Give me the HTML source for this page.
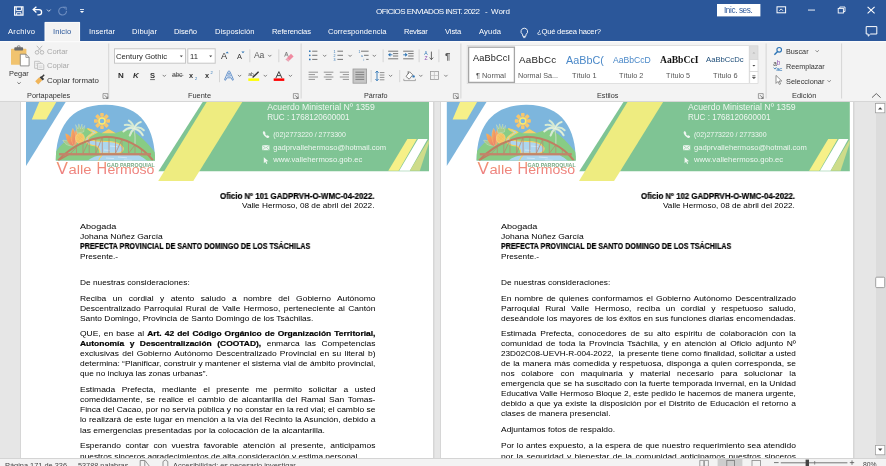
<!DOCTYPE html>
<html><head><meta charset="utf-8">
<style>
*{margin:0;padding:0;box-sizing:border-box}
html,body{width:886px;height:466px;overflow:hidden;background:#e6e6e6;font-family:"Liberation Sans",sans-serif}
.t{position:absolute;white-space:nowrap;line-height:1;will-change:transform}
.s{position:absolute;left:0;top:0;overflow:visible}
.b{position:absolute;white-space:nowrap;line-height:1;color:#000;will-change:transform}
.b b,.bb{color:#000;-webkit-text-stroke:0.2px #000}
.j{text-align:justify;text-align-last:justify;white-space:normal;height:10px;overflow:visible}
.r{text-align:right}
#title{position:absolute;left:0;top:0;width:886px;height:41px;background:#2b579a}
#ribbon{position:absolute;left:0;top:0;width:886px;height:102px}
#ribbonbg{position:absolute;left:0;top:41px;width:886px;height:61px;background:#f3f3f3}
#doc{position:absolute;left:0;top:102px;width:886px;height:356px;background:#e6e6e6;overflow:hidden}
#docin{position:absolute;left:0;top:-102px;width:886px;height:466px}
#status{position:absolute;left:0;top:458px;width:886px;height:8px;background:#f3f3f3;border-top:1px solid #d4d4d4;overflow:hidden}
#stin{position:absolute;left:0;top:-459px;width:886px;height:466px}
.page{position:absolute;top:80px;width:412px;height:400px;background:#fff;box-shadow:0 0 0 1px #d6d6d6,2px 0 0 0 #dedede}
</style></head><body>
<div id="title">

<svg class="s" width="886" height="41" viewBox="0 0 886 41">
 <rect x="44.7" y="22" width="35.3" height="19" fill="#f3f3f3"/>
 <path d="M45.1 41V22.4H79.6V41" fill="none" stroke="#fdfdfd" stroke-width="0.8"/>
 <!-- save -->
 <path d="M14.6 6.8h8.4v8.4h-8.4z" fill="none" stroke="#fff" stroke-width="1.2"/>
 <path d="M16.2 7v3.6h5.2V7" fill="none" stroke="#fff" stroke-width="1"/>
 <path d="M16.6 15v-2.3h4.4V15" fill="none" stroke="#fff" stroke-width="0.9"/>
 <!-- undo -->
 <path d="M33.8 9.6h5.2a2.6 2.6 0 0 1 0 5.2h-1.6" fill="none" stroke="#fff" stroke-width="1.3"/>
 <path d="M36.4 6.8L33.2 9.6l3.2 2.8" fill="none" stroke="#fff" stroke-width="1.3"/>
 <path d="M47 9.6l1.8 1.8 1.8-1.8" fill="none" stroke="#dfe6f1" stroke-width="0.9"/>
 <!-- redo faded -->
 <path d="M65.3 8.3A3.9 3.9 0 1 0 66.5 11" fill="none" stroke="#6d8dc0" stroke-width="1.1"/>
 <path d="M63.2 7.2h3v3" fill="none" stroke="#6d8dc0" stroke-width="1"/>
 <!-- customize -->
 <rect x="80" y="9.2" width="4" height="0.8" fill="#fff"/>
 <path d="M79.9 11h4.2l-2.1 1.9z" fill="#fff"/>
 <!-- sign in -->
 <rect x="717" y="4" width="43.4" height="12.4" fill="#fff"/>
 <!-- ribbon display options -->
 <rect x="777" y="6.8" width="8.6" height="6" fill="none" stroke="#fff" stroke-width="1"/>
 <path d="M779.4 10.8l1.8-1.9 1.8 1.9" fill="none" stroke="#fff" stroke-width="0.9"/>
 <!-- minimize -->
 <rect x="808" y="9.6" width="7" height="0.9" fill="#fff"/>
 <!-- restore -->
 <rect x="838.2" y="8.4" width="5.2" height="4.6" fill="none" stroke="#fff" stroke-width="0.9"/>
 <path d="M839.8 8.4V7h5.2v4.6h-1.6" fill="none" stroke="#fff" stroke-width="0.9"/>
 <!-- close -->
 <path d="M867.6 6.8l7 6.6M874.6 6.8l-7 6.6" stroke="#fff" stroke-width="1.1"/>
 <!-- comments -->
 <path d="M866.2 26.6h10.6v7.4h-6.2l-2.4 2.2v-2.2h-2z" fill="none" stroke="#fff" stroke-width="1"/>
 <!-- lightbulb -->
 <path d="M524.3 28.2a3.3 3.3 0 0 0-1.9 6l.5 2.2h2.8l.5-2.2a3.3 3.3 0 0 0-1.9-6z" fill="none" stroke="#fff" stroke-width="0.9"/>
 <path d="M523.2 37.6h2.2" stroke="#fff" stroke-width="0.8"/>
</svg>

<div class="t" style="left:375.8px;top:7.53px;font-size:8.0px;color:#fff;letter-spacing:-0.55px">OFICIOS ENVIADOS INST. 2022</div>
<div class="t" style="left:484.5px;top:7.53px;font-size:8.0px;color:#fff;">-</div>
<div class="t" style="left:490.5px;top:7.53px;font-size:8.0px;color:#fff;letter-spacing:0px">Word</div>
<div class="t" style="left:8.0px;top:27.97px;font-size:7.6px;color:#fff;letter-spacing:0.274px">Archivo</div>
<div class="t" style="left:88.5px;top:27.97px;font-size:7.6px;color:#fff;letter-spacing:0.033px">Insertar</div>
<div class="t" style="left:131.5px;top:27.97px;font-size:7.6px;color:#fff;letter-spacing:0.153px">Dibujar</div>
<div class="t" style="left:173.5px;top:27.97px;font-size:7.6px;color:#fff;letter-spacing:-0.133px">Diseño</div>
<div class="t" style="left:214.5px;top:27.97px;font-size:7.6px;color:#fff;letter-spacing:0.063px">Disposición</div>
<div class="t" style="left:271.5px;top:27.97px;font-size:7.6px;color:#fff;letter-spacing:-0.155px">Referencias</div>
<div class="t" style="left:328.0px;top:27.97px;font-size:7.6px;color:#fff;letter-spacing:0.044px">Correspondencia</div>
<div class="t" style="left:404.0px;top:27.97px;font-size:7.6px;color:#fff;letter-spacing:-0.345px">Revisar</div>
<div class="t" style="left:445.3px;top:27.97px;font-size:7.6px;color:#fff;letter-spacing:-0.116px">Vista</div>
<div class="t" style="left:479.0px;top:27.97px;font-size:7.6px;color:#fff;letter-spacing:0.144px">Ayuda</div>
<div class="t" style="left:537.0px;top:27.97px;font-size:7.6px;color:#fff;letter-spacing:-0.199px">¿Qué desea hacer?</div>
<div class="t" style="left:52.8px;top:27.97px;font-size:7.6px;color:#2b579a;letter-spacing:0.089px">Inicio</div>
<div class="t" style="left:724.4px;top:7.06px;font-size:8.2px;color:#2b579a;letter-spacing:-0.4px">Inic. ses.</div>

</div>
<div id="ribbonbg"></div>
<div id="ribbon">

<svg class="s" width="886" height="102" viewBox="0 0 886 102" style="top:0">
 <!-- clipboard -->
 <rect x="11" y="48.8" width="15.4" height="16" rx="0.6" fill="#f1c36f"/>
 <rect x="14.3" y="47.2" width="8.8" height="3.4" rx="0.8" fill="#6b6b6b"/>
 <rect x="17.3" y="45.8" width="2.8" height="2.2" rx="1" fill="none" stroke="#6b6b6b" stroke-width="0.8"/>
 <path d="M20.3 54.2h5.6l3.2 3.2v8.5h-8.8z" fill="#fff" stroke="#777" stroke-width="0.8"/>
 <path d="M25.9 54.2v3.2h3.2" fill="none" stroke="#777" stroke-width="0.7"/>
 <path d="M17.4 82.3l1.6 1.6 1.6-1.6" fill="none" stroke="#555" stroke-width="0.8"/>
 <!-- scissors -->
 <circle cx="37" cy="52.4" r="1.8" fill="none" stroke="#b3b3b3" stroke-width="0.9"/>
 <circle cx="42" cy="52.4" r="1.8" fill="none" stroke="#b3b3b3" stroke-width="0.9"/>
 <path d="M37.8 50.8l4.4-5M41.2 50.8l-4.4-5" stroke="#b3b3b3" stroke-width="0.9"/>
 <!-- copy -->
 <path d="M34.6 61.3h4.6l1.6 1.6v5.4h-6.2z" fill="none" stroke="#b8b8b8" stroke-width="0.8"/>
 <path d="M37.6 63.3h4.6l1.6 1.6v4.6h-6.2z" fill="#f3f3f3" stroke="#b8b8b8" stroke-width="0.8"/>
 <path d="M35.6 63.5h2M35.6 65.2h1.6M38.8 66h3.6M38.8 67.6h3.6" stroke="#c9c9c9" stroke-width="0.6"/>
 <!-- format painter -->
 <path d="M35.2 81.2l4-4 3 3-4 4.2z" fill="#f0b55a"/>
 <path d="M39.6 77.6l1.6-1.6 3 3-1.6 1.6z" fill="#3c3c3c"/>
 <path d="M41.8 77.2l2.4-2.4" stroke="#3c3c3c" stroke-width="1.5"/>
 <rect x="108.2" y="43.5" width="1" height="55.0" fill="#d5d5d5"/>
 <!-- font boxes -->
 <rect x="114.5" y="48.8" width="71" height="14.4" fill="#fff" stroke="#c6c6c6" stroke-width="1"/>
 <rect x="187.8" y="48.8" width="27.4" height="14.4" fill="#fff" stroke="#c6c6c6" stroke-width="1"/>
 <path d="M179.8 55.6h3l-1.5 1.6z" fill="#444"/>
 <path d="M209.2 55.6h3l-1.5 1.6z" fill="#444"/>
 <path d="M225.6 53.2l1.6-1.7 1.6 1.7z" fill="#2e75b6"/>
 <path d="M241.4 51.4h3.2l-1.6 1.8z" fill="#2e75b6"/>
 <rect x="249.3" y="49.4" width="1" height="12.800000000000004" fill="#d5d5d5"/>
 <path d="M268.2 54.9l1.6 1.6 1.6-1.6" fill="none" stroke="#666" stroke-width="0.8"/>
 <rect x="278.3" y="49.4" width="1" height="12.800000000000004" fill="#d5d5d5"/>
 <!-- eraser -->
 <path d="M286.8 58.2l4.2-4.4 2.6 2.6-4.2 4.2z" fill="#f08aa0"/>
 <path d="M285.4 59.4l1.4-1.2 2.6 2.6-1 1z" fill="#e8a3b3"/>
 <path d="M284.6 56.6l1.8-4.6 1.8 4.6M285.4 55h1.8" fill="none" stroke="#666" stroke-width="0.7"/>
 <!-- row 2 font -->
 <path d="M150.1 79.6h4.8" stroke="#333" stroke-width="0.7"/>
 <path d="M162.7 74.89999999999999l1.6 1.6 1.6-1.6" fill="none" stroke="#666" stroke-width="0.8"/>
 <path d="M172 75.4h11.4" stroke="#555" stroke-width="0.6"/>
 <text x="195" y="79.6" font-size="4" fill="#2e75b6" font-family="Liberation Sans">2</text>
 <text x="210.6" y="73.6" font-size="4" fill="#2e75b6" font-family="Liberation Sans">2</text>
 <rect x="219" y="70" width="1" height="12.200000000000003" fill="#d5d5d5"/>
 <!-- text effects A -->
 <path d="M224.7 79.2L228.2 71.4Q229 70.2 229.8 71.4L233.3 79.2Q233.6 80.4 232.4 80.2L231.3 77.8H226.7L225.6 80.2Q224.4 80.4 224.7 79.2z" fill="#fff" stroke="#4a80c2" stroke-width="0.85"/>
 <path d="M227.5 76.2L229 72.6 230.5 76.2z" fill="#f3f3f3" stroke="#4a80c2" stroke-width="0.7"/>
 <path d="M238 74.89999999999999l1.6 1.6 1.6-1.6" fill="none" stroke="#666" stroke-width="0.8"/>
 <!-- highlighter -->
 <text x="248.2" y="76.2" font-size="5.4" fill="#555" font-family="Liberation Sans" letter-spacing="-0.4">ab</text>
 <path d="M252.6 77.6l6-5.8" stroke="#333" stroke-width="1.4"/>
 <rect x="248.3" y="78.4" width="10.9" height="2.5" fill="#ffff00"/>
 <path d="M263.7 74.89999999999999l1.6 1.6 1.6-1.6" fill="none" stroke="#666" stroke-width="0.8"/>
 <!-- font color -->
 <path d="M275.8 78.2l3.1-6.6 3.1 6.6M277.1 75.6h3.6" fill="none" stroke="#333" stroke-width="0.9"/>
 <rect x="273.7" y="78.4" width="10.6" height="2.5" fill="#ff0000"/>
 <path d="M288.8 74.89999999999999l1.6 1.6 1.6-1.6" fill="none" stroke="#666" stroke-width="0.8"/>
 <path d="M107.8 95.8V93.6H103v4.8h2.2" fill="none" stroke="#7a7a7a" stroke-width="0.7"/><path d="M104.6 95.19999999999999l3.2 3.2M107.8 96.19999999999999v2.2h-2.2" fill="none" stroke="#555" stroke-width="0.75"/>
 <path d="M298.2 95.8V93.6H293.4v4.8h2.2" fill="none" stroke="#7a7a7a" stroke-width="0.7"/><path d="M295.0 95.19999999999999l3.2 3.2M298.2 96.19999999999999v2.2h-2.2" fill="none" stroke="#555" stroke-width="0.75"/>
 <rect x="300.6" y="43.5" width="1" height="55.0" fill="#d5d5d5"/>
 <!-- bullets -->
 <g fill="#2e75b6"><circle cx="309.8" cy="51.2" r="0.85"/><circle cx="309.8" cy="55.3" r="0.85"/><circle cx="309.8" cy="59.4" r="0.85"/></g>
 <path d="M312.2 51.2h5.2M312.2 55.3h5.2M312.2 59.4h5.2" stroke="#555" stroke-width="0.8"/>
 <path d="M323.1 54.9l1.6 1.6 1.6-1.6" fill="none" stroke="#666" stroke-width="0.8"/>
 <text x="333.6" y="53" font-size="3.6" fill="#2e75b6" font-family="Liberation Sans">1</text>
 <text x="333.6" y="57" font-size="3.6" fill="#2e75b6" font-family="Liberation Sans">2</text>
 <text x="333.6" y="61" font-size="3.6" fill="#2e75b6" font-family="Liberation Sans">3</text>
 <path d="M337.4 51.2h5.6M337.4 55.3h5.6M337.4 59.4h5.6" stroke="#555" stroke-width="0.8"/>
 <path d="M348.5 54.9l1.6 1.6 1.6-1.6" fill="none" stroke="#666" stroke-width="0.8"/>
 <text x="358.4" y="53" font-size="3.4" fill="#2e75b6" font-family="Liberation Sans">1</text>
 <text x="361" y="57" font-size="3.4" fill="#2e75b6" font-family="Liberation Sans">a</text>
 <text x="363.4" y="61" font-size="3.4" fill="#2e75b6" font-family="Liberation Sans">i</text>
 <path d="M361 51.2h7.6M364 55.3h4.6M366.2 59.4h2.4" stroke="#555" stroke-width="0.8"/>
 <path d="M372.7 54.9l1.6 1.6 1.6-1.6" fill="none" stroke="#666" stroke-width="0.8"/>
 <rect x="382.6" y="49.4" width="1" height="12.800000000000004" fill="#d5d5d5"/>
 <!-- indents -->
 <path d="M388.2 51.2h10M393 53.6h5.2M393 56h5.2M388.2 58.8h10" stroke="#555" stroke-width="0.8"/>
 <path d="M388 54.8l2.4-2v4z" fill="#2e75b6"/><path d="M389.8 54.8h2.6" stroke="#2e75b6" stroke-width="0.9"/>
 <path d="M403.2 51.2h10.4M408.2 53.6h5.4M408.2 56h5.4M403.2 58.8h10.4" stroke="#555" stroke-width="0.8"/>
 <path d="M407.6 54.8l-2.4-2v4z" fill="#2e75b6"/><path d="M403.2 54.8h2.6" stroke="#2e75b6" stroke-width="0.9"/>
 <rect x="418.6" y="49.4" width="1" height="12.800000000000004" fill="#d5d5d5"/>
 <!-- sort -->
 <text x="424.2" y="55" font-size="5" fill="#2e75b6" font-family="Liberation Sans">A</text>
 <text x="424.4" y="60.4" font-size="5" fill="#8f52b3" font-family="Liberation Sans">Z</text>
 <path d="M431.4 51.6v8M429.6 57.6l1.8 2 1.8-2" fill="none" stroke="#444" stroke-width="0.8"/>
 <rect x="438.4" y="49.4" width="1" height="12.800000000000004" fill="#d5d5d5"/>
 <!-- align row -->
 <path d="M308.6 72.2h9.4M308.6 74.6h6.4M308.6 77h9.4M308.6 79.4h6.4" stroke="#8a8a8a" stroke-width="0.9"/>
 <path d="M323.8 72.2h9.6M325.6 74.6h6M323.8 77h9.6M325.6 79.4h6" stroke="#8a8a8a" stroke-width="0.9"/>
 <path d="M339.8 72.2h9.2M342.8 74.6h6.2M339.8 77h9.2M342.8 79.4h6.2" stroke="#8a8a8a" stroke-width="0.9"/>
 <rect x="353" y="69" width="13.6" height="14.2" fill="#c6c6c6" stroke="#9a9a9a" stroke-width="0.8"/>
 <path d="M355.4 72.2h8.8M355.4 74.6h8.8M355.4 77h8.8M355.4 79.4h8.8" stroke="#777" stroke-width="0.9"/>
 <rect x="370.6" y="70" width="1" height="12.200000000000003" fill="#d5d5d5"/>
 <path d="M377 71.2v9.4M375.4 72.8l1.6-1.8 1.6 1.8M375.4 79l1.6 1.8 1.6-1.8" fill="none" stroke="#2e75b6" stroke-width="0.9"/>
 <path d="M379.8 72.6h4.6M379.8 75h4.6M379.8 77.4h4.6M379.8 79.8h4.6" stroke="#777" stroke-width="0.8"/>
 <path d="M389 74.89999999999999l1.6 1.6 1.6-1.6" fill="none" stroke="#666" stroke-width="0.8"/>
 <rect x="399.2" y="70" width="1" height="12.200000000000003" fill="#d5d5d5"/>
 <!-- shading -->
 <path d="M406 76.4l3.6-4.6 3.2 3-3.6 4.4z" fill="#fff" stroke="#555" stroke-width="0.7"/>
 <path d="M408.2 71v3" stroke="#555" stroke-width="0.7"/>
 <circle cx="413.6" cy="76.4" r="1.2" fill="#2e75b6"/>
 <path d="M403.8 78.8v1.8h11.6v-1.8" fill="none" stroke="#777" stroke-width="0.6"/>
 <path d="M419.2 74.89999999999999l1.6 1.6 1.6-1.6" fill="none" stroke="#666" stroke-width="0.8"/>
 <!-- borders -->
 <rect x="430.4" y="71.5" width="8" height="8" fill="none" stroke="#999" stroke-width="0.8"/>
 <path d="M434.4 71.5v8M430.4 75.5h8" stroke="#bbb" stroke-width="0.7"/>
 <path d="M444.3 74.89999999999999l1.6 1.6 1.6-1.6" fill="none" stroke="#666" stroke-width="0.8"/>
 <path d="M458.2 95.8V93.6H453.4v4.8h2.2" fill="none" stroke="#7a7a7a" stroke-width="0.7"/><path d="M455.0 95.19999999999999l3.2 3.2M458.2 96.19999999999999v2.2h-2.2" fill="none" stroke="#555" stroke-width="0.75"/>
 <rect x="460.4" y="43.5" width="1" height="55.0" fill="#d5d5d5"/>
 <!-- styles gallery -->
 <rect x="467.2" y="45.6" width="282" height="38" fill="#fff" stroke="#dadada" stroke-width="0.8"/>
 <rect x="468.6" y="47.2" width="45.8" height="35.2" fill="#fff" stroke="#a6a6a6" stroke-width="1.3"/>
 <rect x="749.8" y="45.8" width="8.2" height="13.8" fill="#dedede" stroke="#d0d0d0" stroke-width="0.6"/>
 <rect x="749.8" y="59.6" width="8.2" height="12" fill="#fff" stroke="#d0d0d0" stroke-width="0.6"/>
 <rect x="749.8" y="71.6" width="8.2" height="12" fill="#fff" stroke="#d0d0d0" stroke-width="0.6"/>
 <path d="M752.4 53.4l1.5-1.5 1.5 1.5z" fill="#b8b8b8"/>
 <path d="M752.4 65l1.5 1.5 1.5-1.5z" fill="#444"/>
 <path d="M752.4 75.6h3M752.4 77.2l1.5 1.5 1.5-1.5z" fill="#444" stroke="#444" stroke-width="0.6"/>
 <path d="M763.1999999999999 95.8V93.6H758.4v4.8h2.2" fill="none" stroke="#7a7a7a" stroke-width="0.7"/><path d="M760.0 95.19999999999999l3.2 3.2M763.1999999999999 96.19999999999999v2.2h-2.2" fill="none" stroke="#555" stroke-width="0.75"/>
 <rect x="765.6" y="43.5" width="1" height="55.0" fill="#d5d5d5"/>
 <!-- search -->
 <circle cx="779.2" cy="49.8" r="2.3" fill="none" stroke="#2e75b6" stroke-width="1.1"/>
 <path d="M777.6 51.6l-3.2 3.2" stroke="#2e75b6" stroke-width="1.4"/>
 <path d="M815.6 50.300000000000004l1.6 1.6 1.6-1.6" fill="none" stroke="#666" stroke-width="0.8"/>
 <!-- replace -->
 <text x="773.2" y="66.2" font-size="6.4" fill="#444" font-family="Liberation Sans">a</text>
 <text x="776.8" y="65.4" font-size="6.4" fill="#8f52b3" font-family="Liberation Sans">b</text>
 <text x="776.2" y="71" font-size="6.2" fill="#2e75b6" font-family="Liberation Sans" letter-spacing="-0.4">ac</text>
 <path d="M773.6 67.6l1.4 1.5 1.4-1.8" fill="none" stroke="#2e75b6" stroke-width="0.8"/>
 <!-- select -->
 <path d="M776 75.4v8l1.9-1.9 1.5 3 1.2-.6-1.5-2.9h2.7z" fill="#fff" stroke="#666" stroke-width="0.7"/>
 <path d="M827.6 80.3l1.6 1.6 1.6-1.6" fill="none" stroke="#666" stroke-width="0.8"/>
 <rect x="841.1" y="43.5" width="1" height="55.0" fill="#d5d5d5"/>
 <path d="M872 97.6l4.3-4 4.3 4" fill="none" stroke="#555" stroke-width="0.9"/>
 <rect x="0" y="101" width="886" height="1" fill="#d6d6d6"/>
 <rect x="0" y="41" width="886" height="1.3" fill="#fbfbfb"/>
</svg>

<div class="t" style="left:9.2px;top:69.54px;font-size:7.4px;color:#333;">Pegar</div>
<div class="t" style="left:47.0px;top:47.55px;font-size:7.5px;color:#a8a8a8;">Cortar</div>
<div class="t" style="left:47.0px;top:62.27px;font-size:7.6px;color:#a8a8a8;">Copiar</div>
<div class="t" style="left:47.0px;top:76.85px;font-size:7.85px;color:#333;">Copiar formato</div>
<div class="t" style="left:27.3px;top:92.08px;font-size:7.35px;color:#333;">Portapapeles</div>
<div class="t" style="left:116.4px;top:52.52px;font-size:7.65px;color:#262626;">Century Gothic</div>
<div class="t" style="left:190.1px;top:52.57px;font-size:7.6px;color:#262626;">11</div>
<div class="t" style="left:188.0px;top:92.04px;font-size:7.4px;color:#333;">Fuente</div>
<div class="t" style="left:364.0px;top:92.21px;font-size:7.2px;color:#333;">Párrafo</div>
<div class="t" style="left:597.3px;top:92.16px;font-size:7.25px;color:#333;">Estilos</div>
<div class="t" style="left:791.6px;top:92.24px;font-size:7.4px;color:#333;">Edición</div>
<div class="t" style="left:785.9px;top:47.96px;font-size:7.25px;color:#333;">Buscar</div>
<div class="t" style="left:785.9px;top:63.11px;font-size:7.2px;color:#333;">Reemplazar</div>
<div class="t" style="left:785.9px;top:77.78px;font-size:7.35px;color:#333;">Seleccionar</div>
<div class="t" style="left:118.3px;top:71.53px;font-size:8.0px;color:#2a2a2a;font-weight:bold;">N</div>
<div class="t" style="left:133.4px;top:71.53px;font-size:8.0px;color:#333;font-weight:bold;font-style:italic">K</div>
<div class="t" style="left:150.0px;top:71.87px;font-size:7.6px;color:#333;font-weight:bold;">S</div>
<div class="t" style="left:172.3px;top:72.46px;font-size:6.9px;color:#555;letter-spacing:-0.3px">abc</div>
<div class="t" style="left:189.3px;top:72.34px;font-size:7.4px;color:#333;font-weight:bold;">x</div>
<div class="t" style="left:205.2px;top:72.34px;font-size:7.4px;color:#333;font-weight:bold;">x</div>
<div class="t" style="left:220.6px;top:51.91px;font-size:9.2px;color:#333;">A</div>
<div class="t" style="left:236.8px;top:53.44px;font-size:7.4px;color:#333;">A</div>
<div class="t" style="left:254.0px;top:51.32px;font-size:8.6px;color:#595959;letter-spacing:-0.3px">Aa</div>
<div class="t" style="left:445.3px;top:50.76px;font-size:9.5px;color:#555;font-weight:bold;">¶</div>
<div class="t" style="left:472.6px;top:54.41px;font-size:9.2px;color:#222;letter-spacing:0.15px">AaBbCcI</div>
<div class="t" style="left:475.5px;top:72.04px;font-size:7.4px;color:#555;">¶ Normal</div>
<div class="t" style="left:519.3px;top:54.90px;font-size:9.8px;color:#222;letter-spacing:0.25px">AaBbCc</div>
<div class="t" style="left:518.0px;top:72.21px;font-size:7.2px;color:#555;">Normal Sa...</div>
<div class="t" style="left:565.8px;top:54.86px;font-size:10.8px;color:#4a88c8;letter-spacing:0px">AaBbC(</div>
<div class="t" style="left:572.2px;top:72.04px;font-size:7.4px;color:#555;">Título 1</div>
<div class="t" style="left:612.8px;top:55.62px;font-size:8.6px;color:#4a88c8;letter-spacing:0px">AaBbCcD</div>
<div class="t" style="left:619.2px;top:72.12px;font-size:7.3px;color:#555;">Título 2</div>
<div class="t" style="left:659.5px;top:54.87px;font-size:9.6px;color:#111;font-weight:bold;font-family:'Liberation Serif',serif;letter-spacing:0px">AaBbCcI</div>
<div class="t" style="left:666.3px;top:72.21px;font-size:7.2px;color:#555;">Título 5</div>
<div class="t" style="left:706.3px;top:56.38px;font-size:7.7px;color:#1f4e79;letter-spacing:0px">AaBbCcDc</div>
<div class="t" style="left:713.0px;top:72.04px;font-size:7.4px;color:#555;">Título 6</div>

</div>
<div id="doc"><div id="docin">
  <div class="page" style="left:21px"></div>
  <div class="page" style="left:441px"></div>
  
<svg class="s" width="886" height="466" viewBox="0 0 886 466" style="top:0;left:0">
<g transform="translate(0,0)">
 <path d="M26 101.5H66L26 166z" fill="#7db5dc"/>
 <path d="M39.4 101.5h17.2L46.2 119.6H31.8z" fill="#f6f088"/>
 <path d="M203 101.5H429V171.2H158.4z" fill="#7fc494"/>
 <path d="M207 101.5h35.6l-49.3 79.6H158.2z" fill="#eeec80"/>
 <path d="M407.4 139h9.4l-18.2 31.8h-10.3z" fill="#f6f088"/>
 <path d="M418 139h9.6l-17.8 31.8h-10.6z" fill="#ffffff"/>
 <path d="M428.8 139.5v4l-9 27.3h-10z" fill="#cedc8a"/>
 <!-- logo disc -->
 <defs><clipPath id="disc0"><path d="M55.8 160.5C56 130 68 104.8 105.4 104.8C142.8 104.8 154.8 130 155 160.5z"/></clipPath>
 <linearGradient id="vh0" x1="0" y1="0" x2="0" y2="1"><stop offset="0" stop-color="#f39a6e"/><stop offset="1" stop-color="#ec7885"/></linearGradient>
 <linearGradient id="fl0" x1="0" y1="0" x2="1" y2="1"><stop offset="0" stop-color="#f7b25a"/><stop offset="1" stop-color="#ea7a6c"/></linearGradient></defs>
 <g clip-path="url(#disc0)">
 <rect x="54" y="103" width="104" height="60" fill="#7db6dd"/>
 <!-- hills -->
 <path d="M54 162V154C58 148 70 134 84.5 128.4 91 128.2 96 131 101.6 133L108.7 128.9 115.8 133C120 131 126 129.6 131 130.4 140 134 150 146 158 156V162z" fill="#88cc85"/>
 <path d="M101.6 133.2L108.7 128.9 115.8 133.2z" fill="#f6cf6e"/>
 <!-- road/river upper -->
 <path d="M87.4 128.6C91 129.6 95 130.6 96.9 132.4 93 134.6 88 136.6 88.1 139 92 141.6 104 141.4 110 141.6 116 142 121 144.4 123.2 147.8 124 151 121 153 118 153.4H100C100 150 98 147 96 146 90 145.4 86 143.2 85.6 140.4 85.8 136.8 90 134.6 93 132.6 91 131.2 89 130 87.4 128.6z" fill="#acd6ef" stroke="#f6d25e" stroke-width="1.1"/>
 <!-- river lower -->
 <path d="M86 162C90 158 96 155.4 104 155H139C142 156 146 159 148 162z" fill="#acd6ef"/>
 <path d="M98 162C99 159 100 157 102 155.4" fill="none" stroke="#f6d25e" stroke-width="1.2"/>
 <path d="M106 158l8 .6M118 157l9 .8M124 160l8 .4M104 150l6 .4M110 146l7 .6" stroke="#e6f3fb" stroke-width="0.6"/>
 <!-- sun -->
 <g transform="translate(102 121)" fill="#f8c66c">
  <rect x="-1.75" y="-8" width="3.5" height="3.8" rx="0.7"/>
  <rect x="-1.75" y="-8" width="3.5" height="3.8" rx="0.7" transform="rotate(45)"/>
  <rect x="-1.75" y="-8" width="3.5" height="3.8" rx="0.7" transform="rotate(90)"/>
  <rect x="-1.75" y="-8" width="3.5" height="3.8" rx="0.7" transform="rotate(135)"/>
  <rect x="-1.75" y="-8" width="3.5" height="3.8" rx="0.7" transform="rotate(180)"/>
  <rect x="-1.75" y="-8" width="3.5" height="3.8" rx="0.7" transform="rotate(225)"/>
  <rect x="-1.75" y="-8" width="3.5" height="3.8" rx="0.7" transform="rotate(270)"/>
  <rect x="-1.75" y="-8" width="3.5" height="3.8" rx="0.7" transform="rotate(315)"/>
  <circle r="4" fill="#fbef6c" stroke="#f8c66c" stroke-width="0.7"/>
  <circle r="2.3" fill="#7db6dd"/>
 </g>
 <!-- leaves, flower, pineapple -->
 <path d="M62.8 140.3C66.5 140 71 141.6 74.2 145.6 69.4 146.6 64.8 144.6 62.8 140.3z" fill="#a9c98f" stroke="#dbe9d2" stroke-width="0.4"/>
 <path d="M75.9 130C78.6 134 78.4 140.6 75.6 145.6 73.4 141 73.4 135 75.9 130z" fill="#f5a56a"/>
 <path d="M65.4 133.4C70 134.6 73.6 139.2 74 146 69 145.6 66 140.6 65.4 133.4z" fill="url(#fl0)"/>
 <path d="M72.8 128.3C75.6 132.4 76.4 139.6 74 146.2 70.6 141.4 70 134 72.8 128.3z" fill="url(#fl0)" stroke="#f9d38a" stroke-width="0.3"/>
 <path d="M77.2 133.2l-1.6-8.6 2.4 4.4.8-5.2 1.6 5 1.6-4.8.4 5 2.4-3.6-1.2 6.6z" fill="#a6cc8f" stroke="#d8ead0" stroke-width="0.35"/>
 <ellipse cx="80" cy="138.3" rx="4.5" ry="5.3" fill="#f6c86a" stroke="#f9e0a2" stroke-width="0.4"/>
 <path d="M77 136l6 5M77 140l5 3.4M78 134l5.4 4.6M83 135.6l-5.4 6M82.6 133.6l-4.6 5" stroke="#efb85c" stroke-width="0.35"/>
 <!-- palm -->
 <path d="M135 145.2c.4-5 .2-10-.8-16" fill="none" stroke="#b9d8b6" stroke-width="1.3"/>
 <g fill="none" stroke="#d6ead3" stroke-width="2.1" stroke-linecap="round">
  <path d="M134.2 128.6c-3-1.4-7-.8-10.8 2.8"/>
  <path d="M134.2 128.6c-2.6-3-6-4.4-9.4-3.6"/>
  <path d="M134.2 128.6c-.8-3.4-2.8-6.4-5.4-8"/>
  <path d="M134.2 128.6c1.2-3.2 3.4-5.8 6.6-6.6"/>
  <path d="M134.2 128.6c3-1.6 7-1 9.6 1.6"/>
  <path d="M134.2 128.6c3.2.6 6.6 2.8 8.6 6.6"/>
  <path d="M134.2 128.6c-2 1.6-3.6 4-4.4 7"/>
 </g>
 <g fill="none" stroke="#f2f8f0" stroke-width="0.5">
  <path d="M134.2 128.6c-3-1.4-7-.8-10.8 2.8M134.2 128.6c1.2-3.2 3.4-5.8 6.6-6.6M134.2 128.6c3.2.6 6.6 2.8 8.6 6.6"/>
 </g>
 <!-- ground below deck right -->
 <path d="M139 155.4H158V162H148C146 159 142 156.4 139 155.4z" fill="#88cc85"/>
 <!-- bridge -->
 <g stroke="#c0836a" stroke-width="0.7" fill="none">
  <path d="M70.6 153.4L76.5 147.4M76.5 153.4V147.4M83 153.4V142.6M83 153.4L89.2 140M89.2 153.4V140M95.8 153.4V137.8M95.8 153.4L102.3 137M102.3 153.4V137M109 153.4V136.9M115.5 153.4V137.6M115.5 153.4L122 139.2M122 153.4V139.2M128.5 153.4V141.6M128.5 153.4L135 144.8M135 153.4V144.8M141.5 153.4V148.6"/>
 </g>
 <path d="M58.2 160.4C70 148 86 138.8 106 136.8 124 137.2 142 146 152.9 160.4" fill="none" stroke="#bf7f62" stroke-width="2"/>
 <path d="M58.4 160.4L70.6 153.4" stroke="#bf7f62" stroke-width="1.4"/>
 <rect x="59" y="153.1" width="92" height="2.3" fill="#c2846a"/>
 </g>
 <!-- text -->
 <g fill="url(#vh0)" font-family="Liberation Sans">
 <text x="56.6" y="173.6" font-size="15.6" textLength="11.4" lengthAdjust="spacingAndGlyphs">V</text>
 <text x="68.6" y="173.6" font-size="12.4" textLength="23" lengthAdjust="spacingAndGlyphs">alle</text>
 <text x="96.6" y="173.6" font-size="15.6" textLength="10.6" lengthAdjust="spacingAndGlyphs">H</text>
 <text x="107.4" y="173.6" font-size="12.4" textLength="47" lengthAdjust="spacingAndGlyphs">ermoso</text>
 </g>
 <text x="106.8" y="166.9" font-size="5.2" fill="#79ab84" font-family="Liberation Sans" font-weight="bold" textLength="48" lengthAdjust="spacingAndGlyphs">GAD PARROQUIAL</text>
 <!-- contact text -->
 <text x="267.2" y="110.2" font-size="9" fill="#eef6f0" font-family="Liberation Sans" textLength="107.6" lengthAdjust="spacingAndGlyphs">Acuerdo Ministerial Nº 1359</text>
 <text x="267.2" y="120.3" font-size="9" fill="#eef6f0" font-family="Liberation Sans" textLength="82.4" lengthAdjust="spacingAndGlyphs">RUC : 1768120600001</text>
 <text x="273.2" y="136.8" font-size="7.6" fill="#eef6f0" font-family="Liberation Sans" textLength="72.6" lengthAdjust="spacingAndGlyphs">(02)2773220 / 2773300</text>
 <text x="273.2" y="149.8" font-size="7.6" fill="#eef6f0" font-family="Liberation Sans" textLength="112.9" lengthAdjust="spacingAndGlyphs">gadprvallehermoso@hotmail.com</text>
 <text x="273.2" y="162" font-size="7.6" fill="#eef6f0" font-family="Liberation Sans" textLength="89.2" lengthAdjust="spacingAndGlyphs">www.vallehermoso.gob.ec</text>
 <!-- icons -->
 <path d="M263.2 131.6c.6-.4 1.2-.3 1.5.2l.8 1.3c.2.4 0 .8-.4 1 .3.8.9 1.4 1.6 1.7.3-.4.7-.6 1.1-.4l1.2.7c.4.3.4.9 0 1.3-.5.5-1.4.7-2.2.3-1.8-.9-3.3-2.5-3.9-4.4-.2-.7 0-1.4.3-1.7z" fill="#eef6f0"/>
 <path d="M262.2 145.2h7.2v5h-7.2z" fill="#eef6f0"/>
 <path d="M262.4 145.4l3.4 2.6 3.4-2.6M262.4 150l2.4-2M269.2 150l-2.4-2" fill="none" stroke="#7fc494" stroke-width="0.6"/>
 <path d="M263.8 157.2v6l1.5-1.5 1 2.2 1-.4-1-2.2h2.1z" fill="#eef6f0"/>
</g>
</svg>

  
<svg class="s" width="886" height="466" viewBox="0 0 886 466" style="top:0;left:0">
<g transform="translate(420.8,0)">
 <path d="M26 101.5H66L26 166z" fill="#7db5dc"/>
 <path d="M39.4 101.5h17.2L46.2 119.6H31.8z" fill="#f6f088"/>
 <path d="M203 101.5H429V171.2H158.4z" fill="#7fc494"/>
 <path d="M207 101.5h35.6l-49.3 79.6H158.2z" fill="#eeec80"/>
 <path d="M407.4 139h9.4l-18.2 31.8h-10.3z" fill="#f6f088"/>
 <path d="M418 139h9.6l-17.8 31.8h-10.6z" fill="#ffffff"/>
 <path d="M428.8 139.5v4l-9 27.3h-10z" fill="#cedc8a"/>
 <!-- logo disc -->
 <defs><clipPath id="disc420.8"><path d="M55.8 160.5C56 130 68 104.8 105.4 104.8C142.8 104.8 154.8 130 155 160.5z"/></clipPath>
 <linearGradient id="vh420.8" x1="0" y1="0" x2="0" y2="1"><stop offset="0" stop-color="#f39a6e"/><stop offset="1" stop-color="#ec7885"/></linearGradient>
 <linearGradient id="fl420.8" x1="0" y1="0" x2="1" y2="1"><stop offset="0" stop-color="#f7b25a"/><stop offset="1" stop-color="#ea7a6c"/></linearGradient></defs>
 <g clip-path="url(#disc420.8)">
 <rect x="54" y="103" width="104" height="60" fill="#7db6dd"/>
 <!-- hills -->
 <path d="M54 162V154C58 148 70 134 84.5 128.4 91 128.2 96 131 101.6 133L108.7 128.9 115.8 133C120 131 126 129.6 131 130.4 140 134 150 146 158 156V162z" fill="#88cc85"/>
 <path d="M101.6 133.2L108.7 128.9 115.8 133.2z" fill="#f6cf6e"/>
 <!-- road/river upper -->
 <path d="M87.4 128.6C91 129.6 95 130.6 96.9 132.4 93 134.6 88 136.6 88.1 139 92 141.6 104 141.4 110 141.6 116 142 121 144.4 123.2 147.8 124 151 121 153 118 153.4H100C100 150 98 147 96 146 90 145.4 86 143.2 85.6 140.4 85.8 136.8 90 134.6 93 132.6 91 131.2 89 130 87.4 128.6z" fill="#acd6ef" stroke="#f6d25e" stroke-width="1.1"/>
 <!-- river lower -->
 <path d="M86 162C90 158 96 155.4 104 155H139C142 156 146 159 148 162z" fill="#acd6ef"/>
 <path d="M98 162C99 159 100 157 102 155.4" fill="none" stroke="#f6d25e" stroke-width="1.2"/>
 <path d="M106 158l8 .6M118 157l9 .8M124 160l8 .4M104 150l6 .4M110 146l7 .6" stroke="#e6f3fb" stroke-width="0.6"/>
 <!-- sun -->
 <g transform="translate(102 121)" fill="#f8c66c">
  <rect x="-1.75" y="-8" width="3.5" height="3.8" rx="0.7"/>
  <rect x="-1.75" y="-8" width="3.5" height="3.8" rx="0.7" transform="rotate(45)"/>
  <rect x="-1.75" y="-8" width="3.5" height="3.8" rx="0.7" transform="rotate(90)"/>
  <rect x="-1.75" y="-8" width="3.5" height="3.8" rx="0.7" transform="rotate(135)"/>
  <rect x="-1.75" y="-8" width="3.5" height="3.8" rx="0.7" transform="rotate(180)"/>
  <rect x="-1.75" y="-8" width="3.5" height="3.8" rx="0.7" transform="rotate(225)"/>
  <rect x="-1.75" y="-8" width="3.5" height="3.8" rx="0.7" transform="rotate(270)"/>
  <rect x="-1.75" y="-8" width="3.5" height="3.8" rx="0.7" transform="rotate(315)"/>
  <circle r="4" fill="#fbef6c" stroke="#f8c66c" stroke-width="0.7"/>
  <circle r="2.3" fill="#7db6dd"/>
 </g>
 <!-- leaves, flower, pineapple -->
 <path d="M62.8 140.3C66.5 140 71 141.6 74.2 145.6 69.4 146.6 64.8 144.6 62.8 140.3z" fill="#a9c98f" stroke="#dbe9d2" stroke-width="0.4"/>
 <path d="M75.9 130C78.6 134 78.4 140.6 75.6 145.6 73.4 141 73.4 135 75.9 130z" fill="#f5a56a"/>
 <path d="M65.4 133.4C70 134.6 73.6 139.2 74 146 69 145.6 66 140.6 65.4 133.4z" fill="url(#fl420.8)"/>
 <path d="M72.8 128.3C75.6 132.4 76.4 139.6 74 146.2 70.6 141.4 70 134 72.8 128.3z" fill="url(#fl420.8)" stroke="#f9d38a" stroke-width="0.3"/>
 <path d="M77.2 133.2l-1.6-8.6 2.4 4.4.8-5.2 1.6 5 1.6-4.8.4 5 2.4-3.6-1.2 6.6z" fill="#a6cc8f" stroke="#d8ead0" stroke-width="0.35"/>
 <ellipse cx="80" cy="138.3" rx="4.5" ry="5.3" fill="#f6c86a" stroke="#f9e0a2" stroke-width="0.4"/>
 <path d="M77 136l6 5M77 140l5 3.4M78 134l5.4 4.6M83 135.6l-5.4 6M82.6 133.6l-4.6 5" stroke="#efb85c" stroke-width="0.35"/>
 <!-- palm -->
 <path d="M135 145.2c.4-5 .2-10-.8-16" fill="none" stroke="#b9d8b6" stroke-width="1.3"/>
 <g fill="none" stroke="#d6ead3" stroke-width="2.1" stroke-linecap="round">
  <path d="M134.2 128.6c-3-1.4-7-.8-10.8 2.8"/>
  <path d="M134.2 128.6c-2.6-3-6-4.4-9.4-3.6"/>
  <path d="M134.2 128.6c-.8-3.4-2.8-6.4-5.4-8"/>
  <path d="M134.2 128.6c1.2-3.2 3.4-5.8 6.6-6.6"/>
  <path d="M134.2 128.6c3-1.6 7-1 9.6 1.6"/>
  <path d="M134.2 128.6c3.2.6 6.6 2.8 8.6 6.6"/>
  <path d="M134.2 128.6c-2 1.6-3.6 4-4.4 7"/>
 </g>
 <g fill="none" stroke="#f2f8f0" stroke-width="0.5">
  <path d="M134.2 128.6c-3-1.4-7-.8-10.8 2.8M134.2 128.6c1.2-3.2 3.4-5.8 6.6-6.6M134.2 128.6c3.2.6 6.6 2.8 8.6 6.6"/>
 </g>
 <!-- ground below deck right -->
 <path d="M139 155.4H158V162H148C146 159 142 156.4 139 155.4z" fill="#88cc85"/>
 <!-- bridge -->
 <g stroke="#c0836a" stroke-width="0.7" fill="none">
  <path d="M70.6 153.4L76.5 147.4M76.5 153.4V147.4M83 153.4V142.6M83 153.4L89.2 140M89.2 153.4V140M95.8 153.4V137.8M95.8 153.4L102.3 137M102.3 153.4V137M109 153.4V136.9M115.5 153.4V137.6M115.5 153.4L122 139.2M122 153.4V139.2M128.5 153.4V141.6M128.5 153.4L135 144.8M135 153.4V144.8M141.5 153.4V148.6"/>
 </g>
 <path d="M58.2 160.4C70 148 86 138.8 106 136.8 124 137.2 142 146 152.9 160.4" fill="none" stroke="#bf7f62" stroke-width="2"/>
 <path d="M58.4 160.4L70.6 153.4" stroke="#bf7f62" stroke-width="1.4"/>
 <rect x="59" y="153.1" width="92" height="2.3" fill="#c2846a"/>
 </g>
 <!-- text -->
 <g fill="url(#vh420.8)" font-family="Liberation Sans">
 <text x="56.6" y="173.6" font-size="15.6" textLength="11.4" lengthAdjust="spacingAndGlyphs">V</text>
 <text x="68.6" y="173.6" font-size="12.4" textLength="23" lengthAdjust="spacingAndGlyphs">alle</text>
 <text x="96.6" y="173.6" font-size="15.6" textLength="10.6" lengthAdjust="spacingAndGlyphs">H</text>
 <text x="107.4" y="173.6" font-size="12.4" textLength="47" lengthAdjust="spacingAndGlyphs">ermoso</text>
 </g>
 <text x="106.8" y="166.9" font-size="5.2" fill="#79ab84" font-family="Liberation Sans" font-weight="bold" textLength="48" lengthAdjust="spacingAndGlyphs">GAD PARROQUIAL</text>
 <!-- contact text -->
 <text x="267.2" y="110.2" font-size="9" fill="#eef6f0" font-family="Liberation Sans" textLength="107.6" lengthAdjust="spacingAndGlyphs">Acuerdo Ministerial Nº 1359</text>
 <text x="267.2" y="120.3" font-size="9" fill="#eef6f0" font-family="Liberation Sans" textLength="82.4" lengthAdjust="spacingAndGlyphs">RUC : 1768120600001</text>
 <text x="273.2" y="136.8" font-size="7.6" fill="#eef6f0" font-family="Liberation Sans" textLength="72.6" lengthAdjust="spacingAndGlyphs">(02)2773220 / 2773300</text>
 <text x="273.2" y="149.8" font-size="7.6" fill="#eef6f0" font-family="Liberation Sans" textLength="112.9" lengthAdjust="spacingAndGlyphs">gadprvallehermoso@hotmail.com</text>
 <text x="273.2" y="162" font-size="7.6" fill="#eef6f0" font-family="Liberation Sans" textLength="89.2" lengthAdjust="spacingAndGlyphs">www.vallehermoso.gob.ec</text>
 <!-- icons -->
 <path d="M263.2 131.6c.6-.4 1.2-.3 1.5.2l.8 1.3c.2.4 0 .8-.4 1 .3.8.9 1.4 1.6 1.7.3-.4.7-.6 1.1-.4l1.2.7c.4.3.4.9 0 1.3-.5.5-1.4.7-2.2.3-1.8-.9-3.3-2.5-3.9-4.4-.2-.7 0-1.4.3-1.7z" fill="#eef6f0"/>
 <path d="M262.2 145.2h7.2v5h-7.2z" fill="#eef6f0"/>
 <path d="M262.4 145.4l3.4 2.6 3.4-2.6M262.4 150l2.4-2M269.2 150l-2.4-2" fill="none" stroke="#7fc494" stroke-width="0.6"/>
 <path d="M263.8 157.2v6l1.5-1.5 1 2.2 1-.4-1-2.2h2.1z" fill="#eef6f0"/>
</g>
</svg>

  <div class="b" style="left:220.4px;top:192.17px;font-size:8.3px;width:166.9px;font-weight:bold;color:#000;-webkit-text-stroke:0.2px #000;transform:scaleX(0.9481);transform-origin:0 0;">Oficio Nº 101 GADPRVH-O-WMC-04-2022.</div>
<div class="b" style="left:242.3px;top:202.18px;font-size:7.7px;width:127.8px;transform:scaleX(1.0703);transform-origin:0 0;">Valle Hermoso, 08 de abril del 2022.</div>
<div class="b" style="left:80.0px;top:223.28px;font-size:7.7px;width:34.8px;transform:scaleX(1.1825);transform-origin:0 0;">Abogada</div>
<div class="b" style="left:80.0px;top:232.98px;font-size:7.7px;width:78.8px;transform:scaleX(1.1070);transform-origin:0 0;">Johana Núñez García</div>
<div class="b" style="left:80.0px;top:242.37px;font-size:8.3px;width:272.0px;font-weight:bold;color:#000;-webkit-text-stroke:0.2px #000;transform:scaleX(0.8590);transform-origin:0 0;">PREFECTA PROVINCIAL DE SANTO DOMINGO DE LOS TSÁCHILAS</div>
<div class="b" style="left:80.0px;top:252.88px;font-size:7.7px;width:39.5px;transform:scaleX(1.0742);transform-origin:0 0;">Presente.-</div>
<div class="b" style="left:80.0px;top:278.88px;font-size:7.7px;width:105.3px;transform:scaleX(1.0831);transform-origin:0 0;">De nuestras consideraciones:</div>
<div class="b j" style="left:80.0px;top:294.68px;font-size:7.7px;width:268.6px;transform:scaleX(1.1000);transform-origin:0 0;">Reciba un cordial y atento saludo a nombre del Gobierno Autónomo</div>
<div class="b j" style="left:80.0px;top:304.58px;font-size:7.7px;width:268.6px;transform:scaleX(1.1000);transform-origin:0 0;">Descentralizado Parroquial Rural de Valle Hermoso, perteneciente al Cantón</div>
<div class="b" style="left:80.0px;top:314.68px;font-size:7.7px;width:217.1px;transform:scaleX(1.0948);transform-origin:0 0;">Santo Domingo, Provincia de Santo Domingo de los Tsáchilas.</div>
<div class="b j" style="left:80.0px;top:329.58px;font-size:7.7px;width:268.6px;transform:scaleX(1.1000);transform-origin:0 0;">QUE, en base al <b>Art. 42 del Código Orgánico de Organización Territorial,</b></div>
<div class="b j" style="left:80.0px;top:339.78px;font-size:7.7px;width:268.6px;transform:scaleX(1.1000);transform-origin:0 0;"><b>Autonomía y Descentralización (COOTAD),</b> enmarca las Competencias</div>
<div class="b j" style="left:80.0px;top:349.58px;font-size:7.7px;width:268.6px;transform:scaleX(1.1000);transform-origin:0 0;">exclusivas del Gobierno Autónomo Descentralizado Provincial en su literal b)</div>
<div class="b j" style="left:80.0px;top:359.58px;font-size:7.7px;width:270.2px;transform:scaleX(1.0934);transform-origin:0 0;">determina: “Planificar, construir y mantener el sistema vial de ámbito provincial,</div>
<div class="b" style="left:80.0px;top:369.68px;font-size:7.7px;width:122.8px;transform:scaleX(1.0748);transform-origin:0 0;">que no incluya las zonas urbanas”.</div>
<div class="b j" style="left:80.0px;top:386.28px;font-size:7.7px;width:268.6px;transform:scaleX(1.1000);transform-origin:0 0;">Estimada Prefecta, mediante el presente me permito solicitar a usted</div>
<div class="b j" style="left:80.0px;top:396.28px;font-size:7.7px;width:268.6px;transform:scaleX(1.1000);transform-origin:0 0;">comedidamente, se realice el cambio de alcantarilla del Ramal San Tomas-</div>
<div class="b j" style="left:80.0px;top:406.28px;font-size:7.7px;width:269.0px;transform:scaleX(1.0985);transform-origin:0 0;">Finca del Cacao, por no servía pública y no constar en la red vial; el cambio se</div>
<div class="b j" style="left:80.0px;top:416.28px;font-size:7.7px;width:269.4px;transform:scaleX(1.0967);transform-origin:0 0;">lo realizará de este lugar en mención a la vía del Recinto la Asunción, debido a</div>
<div class="b" style="left:80.0px;top:426.98px;font-size:7.7px;width:224.1px;transform:scaleX(1.1132);transform-origin:0 0;">las emergencias presentadas por la colocación de la alcantarilla.</div>
<div class="b j" style="left:80.0px;top:442.38px;font-size:7.7px;width:268.6px;transform:scaleX(1.1000);transform-origin:0 0;">Esperando contar con vuestra favorable atención al presente, anticipamos</div>
<div class="b" style="left:80.0px;top:453.18px;font-size:7.7px;width:262.1px;transform:scaleX(1.0833);transform-origin:0 0;">nuestros sinceros agradecimientos de alta consideración y estima personal.</div>
<div class="b" style="left:641.2px;top:192.17px;font-size:8.3px;width:166.9px;font-weight:bold;color:#000;-webkit-text-stroke:0.2px #000;transform:scaleX(0.9456);transform-origin:0 0;">Oficio Nº 102 GADPRVH-O-WMC-04-2022.</div>
<div class="b" style="left:663.4px;top:202.18px;font-size:7.7px;width:127.8px;transform:scaleX(1.0646);transform-origin:0 0;">Valle Hermoso, 08 de abril del 2022.</div>
<div class="b" style="left:501.0px;top:223.28px;font-size:7.7px;width:34.8px;transform:scaleX(1.1825);transform-origin:0 0;">Abogada</div>
<div class="b" style="left:501.0px;top:232.98px;font-size:7.7px;width:78.8px;transform:scaleX(1.1070);transform-origin:0 0;">Johana Núñez García</div>
<div class="b" style="left:501.0px;top:242.37px;font-size:8.3px;width:272.0px;font-weight:bold;color:#000;-webkit-text-stroke:0.2px #000;transform:scaleX(0.8590);transform-origin:0 0;">PREFECTA PROVINCIAL DE SANTO DOMINGO DE LOS TSÁCHILAS</div>
<div class="b" style="left:501.0px;top:252.88px;font-size:7.7px;width:39.5px;transform:scaleX(1.0742);transform-origin:0 0;">Presente.-</div>
<div class="b" style="left:501.0px;top:278.88px;font-size:7.7px;width:105.3px;transform:scaleX(1.0782);transform-origin:0 0;">De nuestras consideraciones:</div>
<div class="b j" style="left:501.0px;top:294.68px;font-size:7.7px;width:268.1px;transform:scaleX(1.1000);transform-origin:0 0;">En nombre de quienes conformamos el Gobierno Autónomo Descentralizado</div>
<div class="b j" style="left:501.0px;top:304.58px;font-size:7.7px;width:268.1px;transform:scaleX(1.1000);transform-origin:0 0;">Parroquial Rural Valle Hermoso, reciba un cordial y respetuoso saludo,</div>
<div class="b j" style="left:501.0px;top:314.68px;font-size:7.7px;width:270.3px;transform:scaleX(1.0910);transform-origin:0 0;">deseándole los mayores de los éxitos en sus funciones diarias encomendadas.</div>
<div class="b j" style="left:501.0px;top:329.68px;font-size:7.7px;width:268.1px;transform:scaleX(1.1000);transform-origin:0 0;">Estimada Prefecta, conocedores de su alto espíritu de colaboración con la</div>
<div class="b j" style="left:501.0px;top:339.88px;font-size:7.7px;width:268.1px;transform:scaleX(1.1000);transform-origin:0 0;">comunidad de toda la Provincia Tsáchila, y en atención al Oficio adjunto Nº</div>
<div class="b j" style="left:501.0px;top:349.68px;font-size:7.7px;width:277.1px;transform:scaleX(1.0641);transform-origin:0 0;">23D02C08-UEVH-R-004-2022, &nbsp;la presente tiene como finalidad, solicitar a usted</div>
<div class="b j" style="left:501.0px;top:359.78px;font-size:7.7px;width:268.1px;transform:scaleX(1.1000);transform-origin:0 0;">de la manera más comedida y respetuosa, disponga a quien corresponda, se</div>
<div class="b j" style="left:501.0px;top:369.88px;font-size:7.7px;width:268.1px;transform:scaleX(1.1000);transform-origin:0 0;">nos colabore con maquinaria y material necesario para solucionar la</div>
<div class="b j" style="left:501.0px;top:379.88px;font-size:7.7px;width:271.1px;transform:scaleX(1.0876);transform-origin:0 0;">emergencia que se ha suscitado con la fuerte temporada invernal, en la Unidad</div>
<div class="b j" style="left:501.0px;top:389.78px;font-size:7.7px;width:273.5px;transform:scaleX(1.0779);transform-origin:0 0;">Educativa Valle Hermoso Bloque 2, este pedido le hacemos de manera urgente,</div>
<div class="b j" style="left:501.0px;top:399.78px;font-size:7.7px;width:268.1px;transform:scaleX(1.1000);transform-origin:0 0;">debido a que ya existe la disposición por el Distrito de Educación el retorno a</div>
<div class="b" style="left:501.0px;top:409.98px;font-size:7.7px;width:104.0px;transform:scaleX(1.0950);transform-origin:0 0;">clases de manera presencial.</div>
<div class="b" style="left:501.0px;top:425.98px;font-size:7.7px;width:107.9px;transform:scaleX(1.0976);transform-origin:0 0;">Adjuntamos fotos de respaldo.</div>
<div class="b j" style="left:501.0px;top:441.98px;font-size:7.7px;width:268.1px;transform:scaleX(1.1000);transform-origin:0 0;">Por lo antes expuesto, a la espera de que nuestro requerimiento sea atendido</div>
<div class="b j" style="left:501.0px;top:452.58px;font-size:7.7px;width:268.1px;transform:scaleX(1.1000);transform-origin:0 0;">por la seguridad y bienestar de la comunidad anticipamos nuestros sinceros</div>

  <div style="position:absolute;left:876px;top:101px;width:10px;height:357px;background:#dcdcdc"></div>
  <svg class="s" width="886" height="466" viewBox="0 0 886 466">
   <rect x="875.6" y="103.4" width="9.2" height="9.4" fill="#fff" stroke="#9a9a9a" stroke-width="0.7"/>
   <path d="M878 109.6l2.2-2.4 2.2 2.4z" fill="#444"/>
   <rect x="875.7" y="277.2" width="9" height="10.4" rx="1" fill="#fff" stroke="#8c8c8c" stroke-width="0.8"/>
   <rect x="875.6" y="445.4" width="9.2" height="9.4" fill="#fff" stroke="#9a9a9a" stroke-width="0.7"/>
   <path d="M878 448.6l2.2 2.4 2.2-2.4z" fill="#444"/>
  </svg>
</div></div>
<div id="status"><div id="stin">
  <div class="t" style="left:5.4px;top:461.94px;font-size:7.4px;color:#444;">Página 171 de 336</div>

  <div class="t" style="left:78.0px;top:462.02px;font-size:7.3px;color:#444;">53788 palabras</div>

  <div class="t" style="left:173.3px;top:461.94px;font-size:7.4px;color:#444;">Accesibilidad: es necesario investigar</div>

  <div class="t" style="left:863.2px;top:462.44px;font-size:6.8px;color:#444;">80%</div>

  <svg class="s" width="886" height="466" viewBox="0 0 886 466">
   <path d="M140.2 460.5h4.6v6h-4.6zM145 460.5l4.6 6" fill="none" stroke="#777" stroke-width="0.8"/>
   <path d="M163 461.5l2.4-1.6 2.4 1.6v5h-4.8z" fill="none" stroke="#777" stroke-width="0.8"/>
   <rect x="717.6" y="459" width="24.8" height="8" fill="#cdcdcd"/>
   <path d="M699.8 460.4h4v6h-4zM704.4 460.4h4v6h-4z" fill="none" stroke="#888" stroke-width="0.8"/>
   <rect x="726.8" y="460.4" width="7.6" height="6" fill="none" stroke="#777" stroke-width="0.8"/>
   <rect x="752" y="460.4" width="8.4" height="6" fill="none" stroke="#888" stroke-width="0.8"/>
   <path d="M774 462.6h4.6M780.8 462.8h66.6M849.8 462.6h4.4M852 460.4v4.4" stroke="#555" stroke-width="0.8"/>
   <rect x="805.6" y="459.6" width="3.4" height="6.4" fill="#444"/>
   <path d="M814.7 461v3.6" stroke="#666" stroke-width="0.7"/>
  </svg>
</div></div>
</body></html>
